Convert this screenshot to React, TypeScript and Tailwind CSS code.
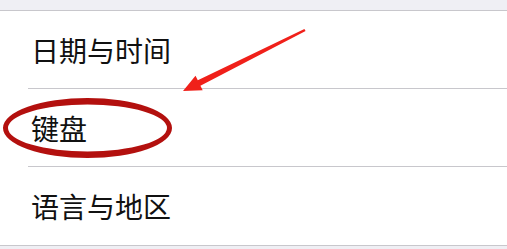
const items = ['日期与时间', '键盘', '语言与地区'];

function Annotations() {
	return (
		<svg
			className="pointer-events-none absolute inset-0"
			width="507"
			height="249"
			viewBox="0 0 507 249"
		>
			<path
				fillRule="evenodd"
				fill="#b3100e"
				d="M3 128 A84.5 30 0 1 0 172 128 A84.5 30 0 1 0 3 128 Z M8 128 A79.5 23.5 0 1 0 167 128 A79.5 23.5 0 1 0 8 128 Z"
			/>
			<path
				d="M304.4 28.9 L305.6 31.1 L200.4 85.7 L202.7 90.2 L183 91 L195.5 75.8 L197.8 80.3 Z"
				fill="#f0201a"
			/>
		</svg>
	);
}

export default function App() {
	return (
		<div
			className="relative h-[249px] w-[507px] overflow-hidden bg-[#efeff4]"
			style={{ fontFamily: '"Noto Sans CJK SC", "Noto Sans", sans-serif' }}
		>
			<div className="mt-[10px] border-y border-[#c8c7cc] bg-white">
				{items.map((label, index) => (
					<div key={label} className="pl-[28px]">
						<div
							className={`flex h-[78px] items-center pl-[3px] ${index < items.length - 1 ? 'border-b border-[#c8c7cc]' : ''}`}
						>
							<span className="text-[28px] font-normal leading-none text-[#111]">{label}</span>
						</div>
					</div>
				))}
			</div>
			<Annotations />
		</div>
	);
}
